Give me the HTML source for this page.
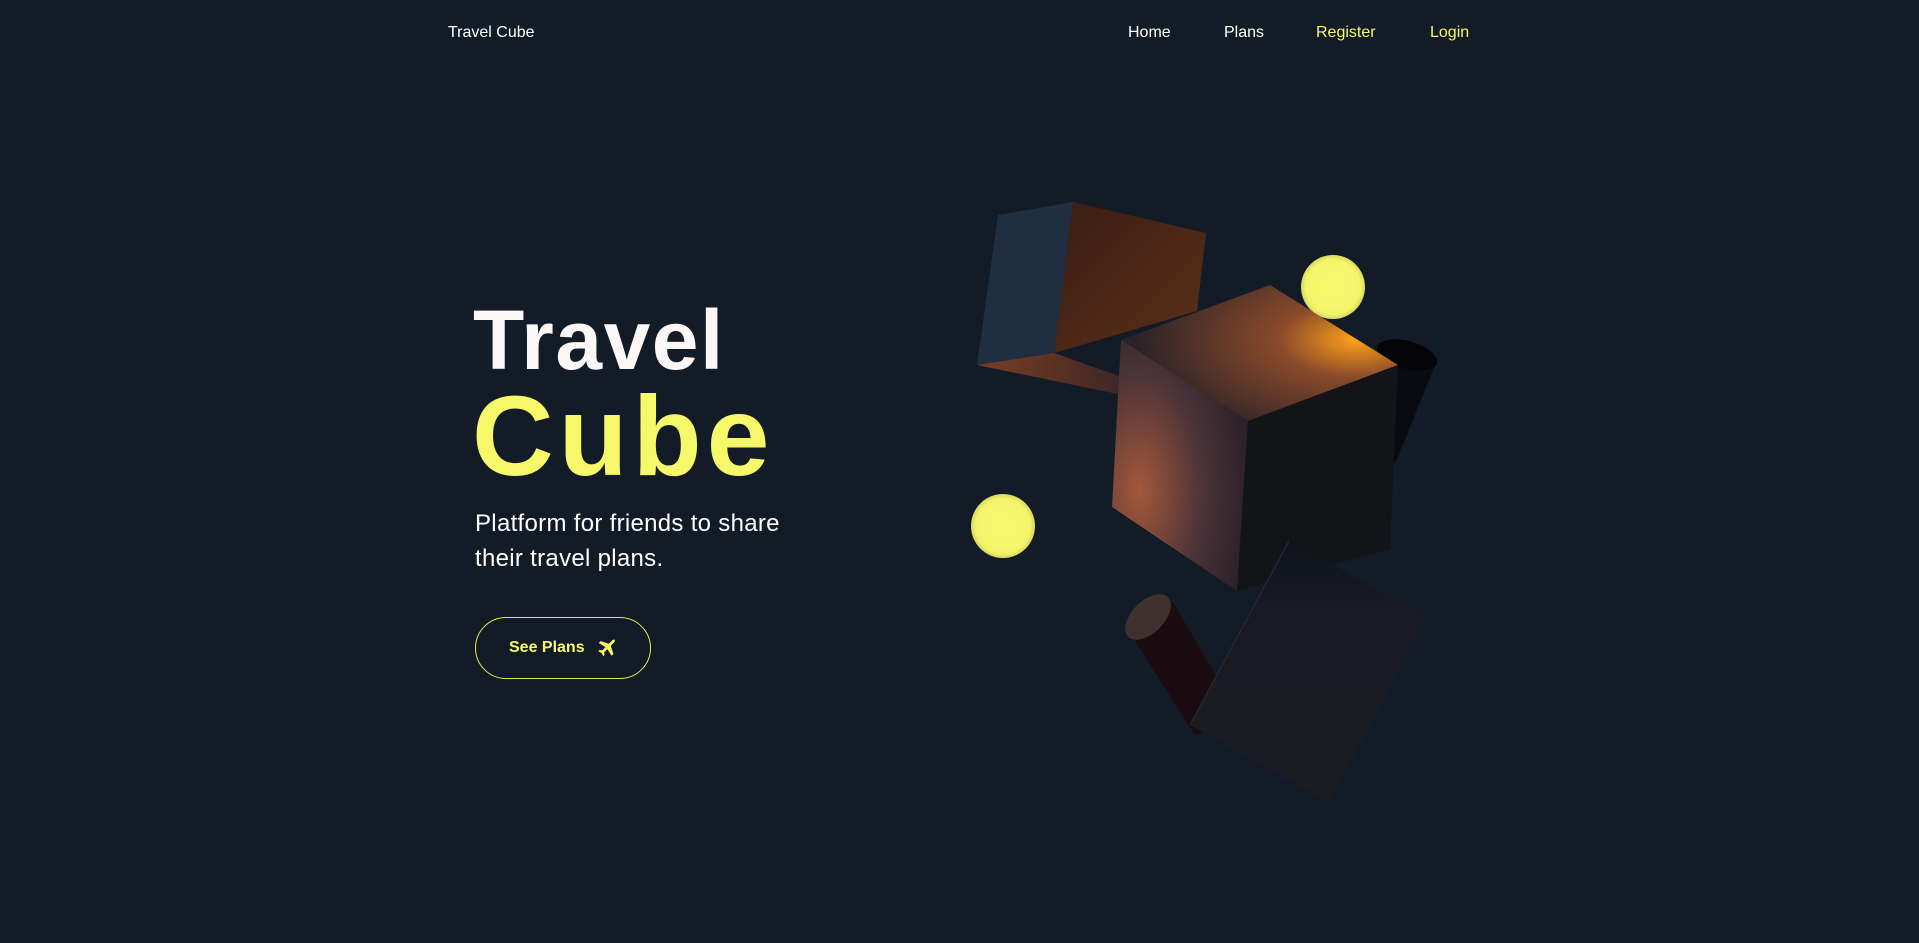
<!DOCTYPE html>
<html><head><meta charset="utf-8"><style>
html,body{margin:0;padding:0;background:#131c26;width:1919px;height:943px;overflow:hidden;font-family:"Liberation Sans",sans-serif;}
.nav{position:absolute;top:24px;font-size:16px;font-weight:500;color:#fff;}
.y{color:#f7f76a;}
#t1{position:absolute;left:473px;top:290px;font-size:84px;font-weight:bold;color:#fbf7f6;letter-spacing:1.5px;line-height:100px;}
#t2{position:absolute;left:472px;top:376px;font-size:113px;font-weight:bold;color:#f7f76a;letter-spacing:5px;line-height:120px;}
#sub{position:absolute;left:475px;top:506px;font-size:24px;font-weight:500;color:#fff;line-height:35px;width:340px;letter-spacing:0.3px;}
#btn{position:absolute;left:475px;top:617px;width:174px;height:60px;border:1px solid #e6e65a;border-radius:31px;}
#btn span{position:absolute;left:33px;top:21px;font-size:16px;font-weight:bold;color:#f7f76a;}
#btn svg{position:absolute;left:120px;top:19px;}
</style></head><body>
<div class="nav" style="left:448px">Travel Cube</div>
<div class="nav" style="left:1128px">Home</div>
<div class="nav" style="left:1224px">Plans</div>
<div class="nav y" style="left:1316px">Register</div>
<div class="nav y" style="left:1430px">Login</div>
<div id="t1">Travel</div>
<div id="t2">Cube</div>
<div id="sub">Platform for friends to share their travel plans.</div>
<div id="btn"><span>See Plans</span>
<svg width="22" height="22" viewBox="0 0 24 24"><path fill="#f7f76a" d="M21 3.5c-1-1-2.5-.6-3.5.4L14 7.4 5 4.5 3 6.5l7.3 4.6-3.4 3.5-3-.5L2.5 15.5l3.6 1.9 1.9 3.6 1.4-1.4-.5-3 3.5-3.4 4.6 7.3 2-2-2.9-9 3.5-3.5c1-1 1.4-2.5.4-3.5z"/></svg></div>
<svg width="1919" height="943" style="position:absolute;left:0;top:0">
<defs>
<linearGradient id="g1" x1="0" y1="0" x2="1" y2="1"><stop offset="0" stop-color="#3a1d14"/><stop offset="1" stop-color="#5a3018"/></linearGradient>
<linearGradient id="g2" x1="0" y1="0" x2="1" y2="0"><stop offset="0" stop-color="#7a3e22"/><stop offset="1" stop-color="#3a2526"/></linearGradient>
<radialGradient id="g3" cx="0.85" cy="0.4" r="0.8"><stop offset="0" stop-color="#ffa21a"/><stop offset="0.35" stop-color="#8a4a2a"/><stop offset="1" stop-color="#2a2228"/></radialGradient>
<radialGradient id="g4" cx="0.2" cy="0.6" r="0.8"><stop offset="0" stop-color="#a3583a"/><stop offset="0.6" stop-color="#4a3238"/><stop offset="1" stop-color="#2c2228"/></radialGradient>
<linearGradient id="g6" x1="0" y1="0" x2="0" y2="1"><stop offset="0" stop-color="#0e141c"/><stop offset="0.3" stop-color="#1a1a24"/><stop offset="1" stop-color="#1c1c24"/></linearGradient>
<radialGradient id="gy"><stop offset="0" stop-color="#f8fa6e"/><stop offset="0.85" stop-color="#f4f46a"/><stop offset="1" stop-color="#d8d860"/></radialGradient>
</defs>
<!-- back cylinder -->
<path d="M1377 355 L1373 460 Q1390 468 1396 462 L1437 360 Z" fill="#0a0b12"/>
<ellipse cx="1407" cy="355" rx="31" ry="14" transform="rotate(15 1407 355)" fill="#050508"/>
<!-- top-left cube -->
<polygon points="998,215 1073,202 1054,353 977,365" fill="#1f2e40"/>
<polygon points="1073,202 1206,233 1197,311 1054,353" fill="url(#g1)"/>
<polygon points="977,365 1054,353 1130,380 1118,394" fill="url(#g2)"/>
<!-- yellow circles -->
<circle cx="1333" cy="287" r="32" fill="url(#gy)"/>
<circle cx="1003" cy="526" r="32" fill="url(#gy)"/>
<!-- big cube -->
<polygon points="1121,340 1270,285 1398,365 1248,421" fill="url(#g3)"/>
<polygon points="1121,340 1248,421 1237,591 1112,507" fill="url(#g4)"/>
<polygon points="1248,421 1398,365 1390,549 1237,591" fill="#121418"/>
<!-- bottom cylinder -->
<path d="M1128 630 L1195 735 L1213 730 L1230 700 L1173 602 Z" fill="#1a0c10"/>
<ellipse cx="1148" cy="617" rx="28" ry="16" transform="rotate(-45 1148 617)" fill="#40302e"/>
<!-- bottom cube -->
<polygon points="1289,541 1427,616 1329,802 1190,725" fill="url(#g6)"/>
<line x1="1289" y1="541" x2="1190" y2="725" stroke="#2c2a34" stroke-width="1"/>
</svg>
</body></html>
